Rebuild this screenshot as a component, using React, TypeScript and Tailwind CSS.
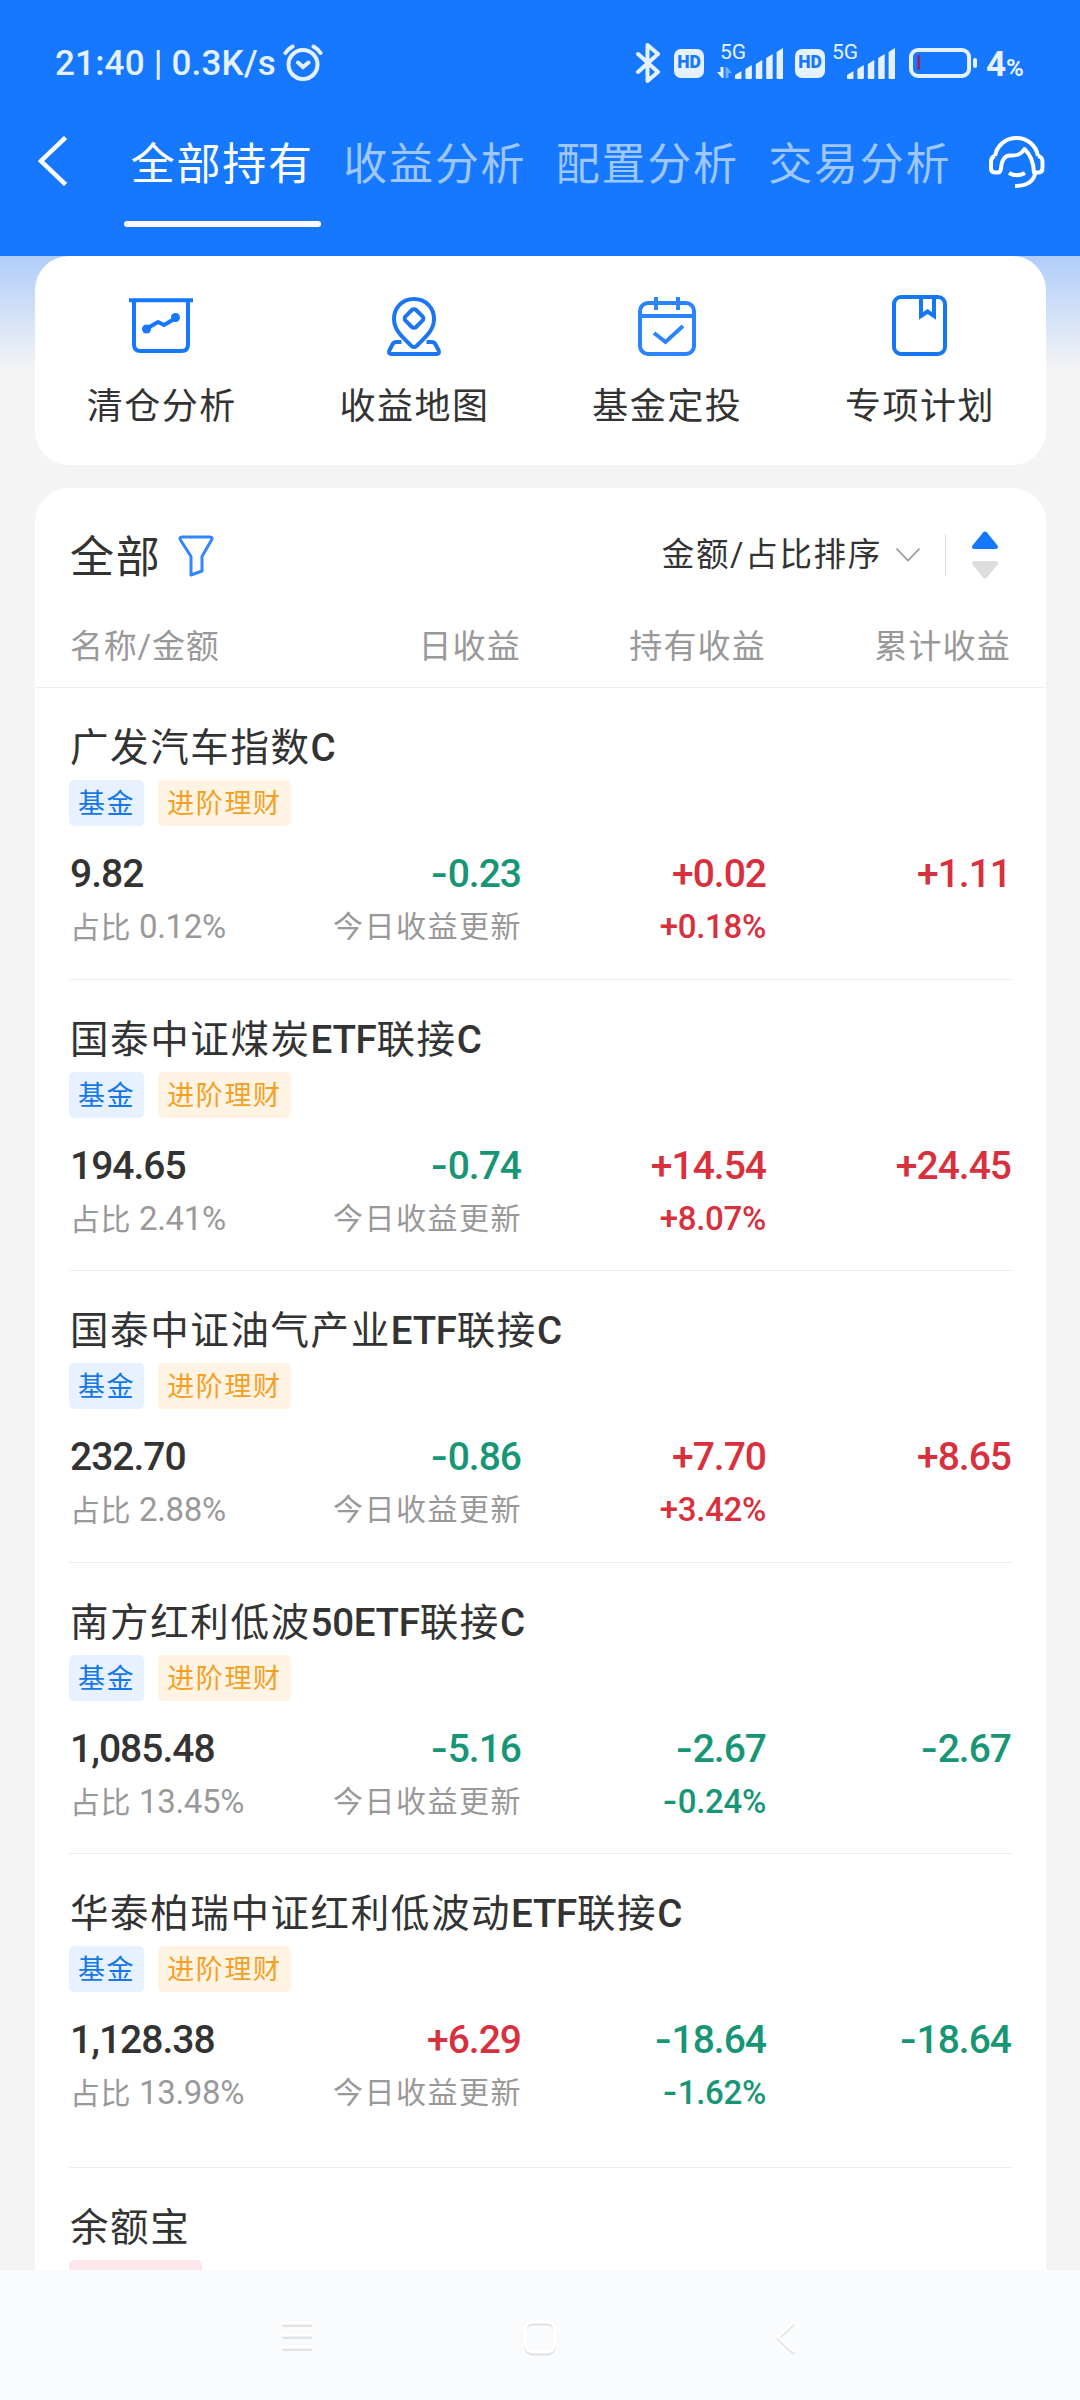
import clsx from "clsx";

const tabs = ["全部持有", "收益分析", "配置分析", "交易分析"];

const funds = [
  {
    name: "广发汽车指数C",
    amount: "9.82",
    ratio: "0.12%",
    day: "-0.23",
    hold: "+0.02",
    holdRate: "+0.18%",
    total: "+1.11",
  },
  {
    name: "国泰中证煤炭ETF联接C",
    amount: "194.65",
    ratio: "2.41%",
    day: "-0.74",
    hold: "+14.54",
    holdRate: "+8.07%",
    total: "+24.45",
  },
  {
    name: "国泰中证油气产业ETF联接C",
    amount: "232.70",
    ratio: "2.88%",
    day: "-0.86",
    hold: "+7.70",
    holdRate: "+3.42%",
    total: "+8.65",
  },
  {
    name: "南方红利低波50ETF联接C",
    amount: "1,085.48",
    ratio: "13.45%",
    day: "-5.16",
    hold: "-2.67",
    holdRate: "-0.24%",
    total: "-2.67",
  },
  {
    name: "华泰柏瑞中证红利低波动ETF联接C",
    amount: "1,128.38",
    ratio: "13.98%",
    day: "+6.29",
    hold: "-18.64",
    holdRate: "-1.62%",
    total: "-18.64",
  },
];

function HdBadge() {
  return (
    <div className="flex h-[29px] w-[30px] items-center justify-center rounded-[7px] bg-[#e6f1ff] text-[17.500px] font-black leading-none text-[#1677ff]">
      HD
    </div>
  );
}

function Signal({ arrows }: { arrows?: boolean }) {
  const x = arrows ? 18 : 15;
  return (
    <svg
      width={arrows ? 66 : 63}
      height="46"
      viewBox={arrows ? "0 0 66 46" : "0 0 63 46"}
      fill="#e6f1ff"
    >
      <text x={arrows ? 3 : 0} y="21" fontSize="21" textLength="26">
        5G
      </text>
      {arrows && (
        <>
          <path d="M3.500 29h3v11H5l-5-6h3.500z" />
          <path d="M8.500 40V29H10l5 6h-3.500v5z" opacity=".45" />
        </>
      )}
      {[8, 14, 19, 25, 31].map((h, i) => (
        <path
          key={h}
          d={`M${x + i * 10.4} ${45 - h}l6.500-4v${h - 1}q0 1-1 1h-4.500q-1 0-1-1z`}
        />
      ))}
    </svg>
  );
}

function StatusBar() {
  return (
    <div className="flex h-[126px] items-center justify-between pr-[54px] pl-[55px] text-[#e6f1ff]">
      <div className="flex items-center">
        <span className="mt-[3px] text-[35px] font-medium tracking-[.200px] whitespace-nowrap">
          21:40 | 0.3K/s
        </span>
        <svg
          className="ml-[7px]"
          width="40"
          height="38"
          viewBox="0 0 40 38"
          fill="none"
          stroke="#e6f1ff"
          strokeWidth="4"
          strokeLinecap="round"
        >
          <circle cx="20" cy="20.500" r="14.500" />
          <path d="M15 18.500l5 4.500 5.500-4.500M2.500 9q2.500-4 7-6.500M37.500 9q-2.500-4-7-6.500" />
        </svg>
      </div>
      <div className="flex items-center">
        <svg
          width="24"
          height="40"
          viewBox="0 0 24 40"
          fill="none"
          stroke="#e6f1ff"
          strokeWidth="4"
          strokeLinejoin="round"
          strokeLinecap="round"
        >
          <path d="M2 11l20 18-10.500 9V2L22 11 2 29" />
        </svg>
        <div className="ml-[14px]">
          <HdBadge />
        </div>
        <div className="ml-[13px] -mt-1">
          <Signal arrows />
        </div>
        <div className="ml-3">
          <HdBadge />
        </div>
        <div className="ml-[7px] -mt-1">
          <Signal />
        </div>
        <svg
          className="ml-[14px]"
          width="68"
          height="30"
          viewBox="0 0 68 30"
          fill="none"
        >
          <rect
            x="2"
            y="2"
            width="58"
            height="26"
            rx="7"
            stroke="#e6f1ff"
            strokeWidth="4"
          />
          <rect x="64" y="10" width="4" height="10" rx="2" fill="#e6f1ff" />
          <rect x="8.500" y="7" width="2.200" height="15" rx="1" fill="#b8143c" />
        </svg>
        <span className="mt-[3px] ml-[9px] flex w-10 items-baseline text-[35px] leading-none font-bold">
          4<span className="text-[24px]">%</span>
        </span>
      </div>
    </div>
  );
}

function Header() {
  return (
    <div className="h-[256px] bg-[#1677ff]">
      <StatusBar />
      <div className="flex h-[101px] items-start pl-[37px]">
        <svg
          className="mt-[10px]"
          width="30"
          height="50"
          viewBox="0 0 30 50"
          fill="none"
          stroke="white"
          strokeWidth="4.500"
        >
          <path d="M28.500 1.500L4 25l24.500 23.500" />
        </svg>
        <div className="ml-[57px] flex gap-[16px]">
          {tabs.map((tab, index) => (
            <div
              key={tab}
              className={clsx(
                "flex w-[196.500px] flex-col items-center text-[44px] tracking-[1.800px] whitespace-nowrap",
                index === 0 ? "text-white" : "text-[#9ec6ff]"
              )}
            >
              <span className="leading-[78px]">{tab}</span>
              {index === 0 && (
                <div className="mt-[17px] h-[6px] w-full rounded-full bg-white" />
              )}
            </div>
          ))}
        </div>
        <svg
          className="ml-[30px] mt-[9px] shrink-0"
          width="58"
          height="54"
          viewBox="0 0 58 54"
          fill="none"
          stroke="white"
          strokeWidth="4"
          strokeLinejoin="round"
        >
          <path d="M7 21C9 10 18 3 28.500 3S48 10 50 21" />
          <path d="M7 21C3.500 22 3 24 3 27v6q0 4.500 4 4.500h3q2.500 0 3-4C13.500 25 17 20.500 22 20.500c7 .500 11-1 14.500-6.500C43 20 45.500 27 46 37.500h4.500q4 0 4-4.500v-6c0-3-.500-5-4.500-6" />
          <path d="M47.500 37C46 46 40 51 27 51M21 38q7.500 4.500 16 0" />
        </svg>
      </div>
    </div>
  );
}

const shortcuts = [
  {
    label: "清仓分析",
    icon: (
      <svg width="64" height="64" viewBox="0 0 64 64" fill="none" stroke="#1677ff" strokeWidth="4">
        <path d="M0 6.200h64M5 6v44.500q0 6.500 6.500 6.500h41q6.500 0 6.500-6.500V6" />
        <path d="M17 35l12-7 6 3 12-7" strokeLinejoin="round" />
        <circle cx="17.500" cy="35" r="4.500" fill="#1677ff" stroke="none" />
        <circle cx="46.500" cy="23.500" r="4.500" fill="#1677ff" stroke="none" />
      </svg>
    ),
  },
  {
    label: "收益地图",
    icon: (
      <svg width="64" height="64" viewBox="0 0 64 64" fill="none" stroke="#1c76f2" strokeWidth="4" strokeLinejoin="round">
        <path d="M32 5C20 5 12 14 12 25c0 10 6 16 17.500 27q2.500 2 5 0C46 41 52 35 52 25 52 14 44 5 32 5z" />
        <rect x="24.500" y="17" width="15" height="15" rx="3" transform="rotate(45 32 24.500)" />
        <path d="M19.500 48h-5q-3 0-4 2.500L7.500 56q-1.500 4 2 4h45q3.500 0 2-4l-3-5.500q-1-2.500-4-2.500h-5" />
      </svg>
    ),
  },
  {
    label: "基金定投",
    icon: (
      <svg width="64" height="64" viewBox="0 0 64 64" fill="none" stroke="#2b84fa" strokeWidth="4">
        <rect x="5" y="9" width="54" height="51" rx="8" />
        <path d="M5 22h54M21 3v13M43 3v13" />
        <path d="M19 39l11.500 9L48 32" />
      </svg>
    ),
  },
  {
    label: "专项计划",
    icon: (
      <svg width="64" height="64" viewBox="0 0 64 64" fill="none" stroke="#1677f5" strokeWidth="4">
        <rect x="6" y="3" width="51" height="57" rx="7" />
        <path d="M33 4v18l6.500-4.500L46 22V4" />
      </svg>
    ),
  },
];

function Shortcuts() {
  return (
    <div className="grid h-[209px] grid-cols-4 rounded-[34px] bg-white">
      {shortcuts.map((item) => (
        <div key={item.label} className="flex flex-col items-center pt-[38px]">
          {item.icon}
          <span className="mt-[24px] pl-px text-[36px] leading-[50px] tracking-[1.500px]">
            {item.label}
          </span>
        </div>
      ))}
    </div>
  );
}

function ListHeader() {
  return (
    <>
      <div className="flex items-center pt-[40px] pr-[47px] pl-[35px]">
        <span className="text-[44px] leading-[60px] tracking-[1.800px]">
          全部
        </span>
        <svg className="ml-[16px] -mt-1" width="36" height="42" viewBox="0 0 36 42" fill="none" stroke="#3385ff" strokeWidth="3" strokeLinejoin="round">
          <path d="M4 2h28q3 0 1.500 3L24 21.500V36l-11 4V21.500L2.500 5Q1 2 4 2z" />
        </svg>
        <div className="-mt-[6px] ml-auto flex items-center">
          <span className="text-[32.500px] leading-[60px] tracking-[1.700px]">
            金额/占比排序
          </span>
          <svg className="ml-[13px]" width="26" height="16" viewBox="0 0 26 16" fill="none" stroke="#999" strokeWidth="1.800">
            <path d="M1.500 1.500L13 13.500l11.500-12" />
          </svg>
          <div className="ml-[24px] h-[42px] w-px bg-[#ddd]" />
          <svg className="ml-[25px]" width="28" height="50" viewBox="0 0 28 50">
            <path d="M3 19q-3-1-1.500-3.500L12 2.500q2-2 4 0l10.500 13Q28 18 25 19z" fill="#1677ff" />
            <path d="M3 31q-3 1-1.500 3.500L12 47.500q2 2 4 0l10.500-13Q28 32 25 31z" fill="#ddd" />
          </svg>
        </div>
      </div>
      <div className="grid h-[100px] grid-cols-[228px_224px_245px_245px] border-b border-[#eee] pt-[31px] pl-[34px] text-[33px] leading-[56px] tracking-[1.200px] text-[#999]">
        <span className="pl-px tracking-[.800px]">名称/金额</span>
        <span className="text-right">日收益</span>
        <span className="text-right">持有收益</span>
        <span className="text-right">累计收益</span>
      </div>
    </>
  );
}

// latin letters and digits are set heavier than the chinese text
function FundName({ name }: { name: string }) {
  return (
    <div className="h-[52px] pl-px text-[38.500px] leading-[52px] tracking-[1.600px]">
      {name.split(/([A-Z0-9]+)/).map((part, index) =>
        index % 2 ? (
          <span key={index} className="font-medium tracking-[-.300px]">
            {part}
          </span>
        ) : (
          part
        )
      )}
    </div>
  );
}

function Profit({ value }: { value: string }) {
  const down = value.startsWith("-");
  return (
    <span className={down ? "text-[#179675]" : "text-[#d8303d]"}>
      <span
        className={clsx(down && "mr-1 inline-block origin-left scale-x-125")}
      >
        {value[0]}
      </span>
      {value.slice(1)}
    </span>
  );
}

function FundRow({ fund, last }: { fund: any; last: boolean }) {
  return (
    <div
      className={clsx(
        "mx-[34px] border-b border-[#eee] pt-[34px]",
        last ? "pb-[54px]" : "pb-[31.500px]"
      )}
    >
      <FundName name={fund.name} />
      <div className="mt-[6px] flex h-[46px] gap-[14px] text-[27px] leading-[48px] tracking-[1.600px]">
        <span className="rounded-[5px] bg-[#e7f1ff] pr-[9px] pl-[9px] text-[#1677e6]">
          基金
        </span>
        <span className="rounded-[5px] bg-[#fff3e3] pr-[9px] pl-[9px] text-[#f5a023]">
          进阶理财
        </span>
      </div>
      <div className="mt-[24px] grid h-[48px] grid-cols-[227px_225px_245px_245px] text-right text-[39px] leading-[48px] font-medium tracking-[-1px]">
        <span className="pl-px text-left">{fund.amount}</span>
        <Profit value={fund.day} />
        <Profit value={fund.hold} />
        <Profit value={fund.total} />
      </div>
      <div className="mt-[9px] grid h-10 grid-cols-[227px_225px_245px_245px] text-right text-[33px] leading-10 tracking-[-.300px] text-[#999]">
        <span className="pl-px text-left">
          <span className="text-[30px] tracking-[.500px]">占比</span>{" "}
          {fund.ratio}
        </span>
        <span className="-mr-px text-[30px] tracking-[1.500px]">
          今日收益更新
        </span>
        <span className="font-medium">
          <Profit value={fund.holdRate} />
        </span>
      </div>
    </div>
  );
}

function NavBar() {
  return (
    <div className="flex h-[130px] items-start bg-[#f9fbfd] pt-[48px] pl-[280px]">
      <svg width="36" height="44" viewBox="0 0 36 44">
        <path d="M2 7.500h30M2 19.500h30M2 31.500h30" stroke="#e2e4e6" strokeWidth="3" />
        <path d="M2 5h30M2 17h30M2 29h30" stroke="#fff" strokeWidth="3" />
      </svg>
      <svg className="ml-[206px]" width="38" height="44" viewBox="0 0 38 44" fill="none" strokeWidth="3">
        <rect x="3.500" y="6" width="29" height="30" rx="7" stroke="#dfe1e3" />
        <rect x="3.500" y="4" width="29" height="30" rx="7" stroke="#fff" />
      </svg>
      <svg className="ml-[214px]" width="30" height="44" viewBox="0 0 30 44" fill="none" strokeWidth="2.500">
        <path d="M20 6L4 21l16 15" stroke="#dfe1e3" />
        <path d="M20 4L4 19l16 15" stroke="#fff" />
      </svg>
    </div>
  );
}

export default function App() {
  return (
    <div className="flex h-[2400px] w-[1080px] flex-col overflow-hidden bg-[#f4f4f4] font-[Roboto,'Noto_Sans_CJK_SC',sans-serif] text-[#333]">
      <Header />
      <main className="h-[2014px] overflow-hidden bg-linear-to-b from-[#b0cdf9] to-[#f4f4f4] to-[114px] pr-[34px] pl-[35px]">
        <Shortcuts />
        <div className="mt-[23px] h-[1800px] rounded-t-[34px] bg-white">
          <ListHeader />
          {funds.map((fund, index) => (
            <FundRow
              key={fund.name}
              fund={fund}
              last={index === funds.length - 1}
            />
          ))}
          <div className="px-[34px] pt-[34px]">
            <FundName name="余额宝" />
            <div className="mt-[6px] h-[46px] w-[133px] rounded-[5px] bg-[#fde7ea]" />
          </div>
        </div>
      </main>
      <NavBar />
    </div>
  );
}
